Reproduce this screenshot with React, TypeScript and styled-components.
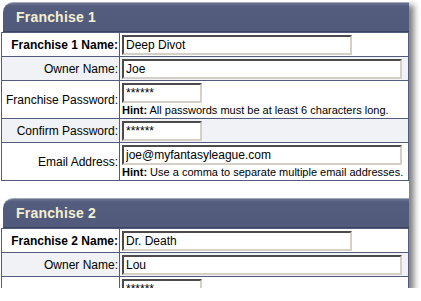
import styled, { createGlobalStyle } from "styled-components";

const GlobalStyle = createGlobalStyle`
  html, body {
    margin: 0;
    padding: 0;
    background: #ffffff;
  }
  body {
    font-family: "Liberation Sans", Arial, sans-serif;
    color: #000000;
  }
`;

// the page sheet, cut off at the bottom, with a soft drop shadow
const Sheet = styled.div`
  width: 409px;
  height: 288px;
  padding-top: 2px;
  box-sizing: border-box;
  overflow: hidden;
  background: #ffffff;
  box-shadow: 5px 5px 6px rgba(0, 0, 0, 0.5);
`;

const Section = styled.section`
  & + & {
    margin-top: 17px;
  }
`;

const Header = styled.div`
  margin-left: 3px;
  height: 30px;
  box-sizing: border-box;
  padding-left: 13px;
  border-top: 1px solid #a4a8b6;
  border-bottom: 1px solid #3d4462;
  border-radius: 10px 0 0 0;
  background: linear-gradient(#6d7491 0px, #555d7e 3px, #525a7b 100%);
  color: #f4f0d2;
  font-size: 14px;
  font-weight: bold;
  letter-spacing: 0.2px;
  line-height: 28px;
`;

const Form = styled.div`
  margin-left: 1px;
  width: 408px;
  box-sizing: border-box;
  border: 1px solid #535b7c;
  border-top: 0;
`;

interface RowProps {
  $shade?: boolean;
  $tall?: boolean;
}

const Row = styled.div<RowProps>`
  display: flex;
  min-height: ${p => (p.$tall ? 37 : 23)}px;
  border-top: 1px solid #535b7c;
  background: ${p => (p.$shade ? "#f1f2f5" : "#ffffff")};
`;

const Label = styled.div<{ $strong?: boolean }>`
  width: 118px;
  flex: none;
  display: flex;
  align-items: center;
  justify-content: flex-end;
  padding-right: 1px;
  box-sizing: border-box;
  border-right: 1px solid #535b7c;
  font-size: 12px;
  font-weight: ${p => (p.$strong ? "bold" : "normal")};
  white-space: nowrap;
`;

const Field = styled.div`
  flex: 1;
  display: flex;
  flex-direction: column;
  align-items: flex-start;
  padding: 2px 2px 1px 2px;
`;

const TextBox = styled.input<{ $w: number }>`
  width: ${p => p.$w}px;
  height: 20px;
  box-sizing: border-box;
  margin: 0;
  padding: 0 2px;
  border: 2px solid;
  border-color: #4b4b4b #d4d0c8 #d4d0c8 #4b4b4b;
  background: #ffffff;
  font-family: "Liberation Sans", Arial, sans-serif;
  font-size: 12px;
  color: #000000;
  outline: none;
`;

const Hint = styled.div`
  margin-top: 1px;
  font-size: 11px;
  line-height: 13px;
  white-space: nowrap;

  b {
    font-weight: bold;
  }
`;

interface Entry {
  label: string;
  value: string;
  width: number;
  strong?: boolean;
  hint?: string;
}

const franchise = (n: number, name: string, owner: string, email: string): Entry[] => [
  { label: `Franchise ${n} Name:`, value: name, width: 230, strong: true },
  { label: "Owner Name:", value: owner, width: 280 },
  {
    label: "Franchise Password:",
    value: "******",
    width: 80,
    hint: "All passwords must be at least 6 characters long.",
  },
  { label: "Confirm Password:", value: "******", width: 80 },
  {
    label: "Email Address:",
    value: email,
    width: 280,
    hint: "Use a comma to separate multiple email addresses.",
  },
];

// the second franchise runs off the bottom of the sheet after its third row
const sections = [
  { title: "Franchise 1", rows: franchise(1, "Deep Divot", "Joe", "joe@myfantasyleague.com") },
  { title: "Franchise 2", rows: franchise(2, "Dr. Death", "Lou", "").slice(0, 3) },
];

const App = () => {
  return (
    <>
      <GlobalStyle />
      <Sheet>
        {sections.map(s => (
          <Section key={s.title}>
            <Header>{s.title}</Header>
            <Form>
              {s.rows.map((r, i) => (
                <Row key={r.label} $shade={i % 2 === 1} $tall={!!r.hint}>
                  <Label $strong={r.strong}>{r.label}</Label>
                  <Field>
                    <TextBox $w={r.width} type="text" value={r.value} readOnly />
                    {r.hint && (
                      <Hint>
                        <b>Hint:</b> {r.hint}
                      </Hint>
                    )}
                  </Field>
                </Row>
              ))}
            </Form>
          </Section>
        ))}
      </Sheet>
    </>
  );
};

export default App;
